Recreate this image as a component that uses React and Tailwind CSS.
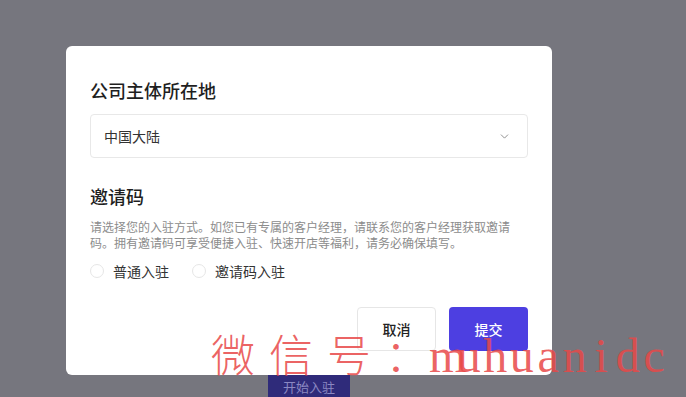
import { ChevronDown } from 'lucide-react'

function Radio({ label }) {
  return (
    <label className="flex items-center gap-[9px] cursor-pointer">
      <span className="h-[14px] w-[14px] rounded-full border border-[#e6e6e6] bg-white" />
      <span className="text-[14px] leading-5 text-[#333]">{label}</span>
    </label>
  )
}

export default function App() {
  return (
    <div className="relative h-[397px] w-[686px] overflow-hidden bg-[#76767e] font-['Noto_Sans_CJK_SC',sans-serif]">
      <div className="pl-[66px] pt-[46px]">
        {/* Modal */}
        <div className="flex h-[329px] w-[486px] flex-col rounded-[6px] bg-white px-6 pt-8 pb-6">
          <h2 className="text-[18px] font-medium leading-6 text-[#1f1f1f]">公司主体所在地</h2>
          <button className="mt-3 flex h-[44px] w-full items-center justify-between rounded-[4px] border border-[#e8e8e8] pl-[13px] pr-4 text-left">
            <span className="text-[14px] text-[#333]">中国大陆</span>
            <ChevronDown size={13} strokeWidth={1.5} className="text-[#777]" />
          </button>

          <h2 className="mt-[26px] text-[18px] font-medium leading-6 text-[#1f1f1f]">邀请码</h2>
          <p className="mt-[11px] w-[424px] text-[12px] leading-4 text-[#8c8c8c]">
            请选择您的入驻方式。如您已有专属的客户经理，请联系您的客户经理获取邀请码。拥有邀请码可享受便捷入驻、快速开店等福利，请务必确保填写。
          </p>
          <div className="mt-[10px] flex items-center gap-[23px]">
            <Radio label="普通入驻" />
            <Radio label="邀请码入驻" />
          </div>

          <div className="mt-auto flex justify-end gap-[13px]">
            <button className="h-[44px] w-[79px] rounded-[4px] border border-[#e6e6e6] bg-white text-[14px] font-medium text-[#222]">
              取消
            </button>
            <button className="h-[44px] w-[79px] rounded-[4px] bg-[#4d3fe1] text-[14px] font-medium text-white">
              提交
            </button>
          </div>
        </div>

        {/* page button behind the overlay */}
        <div className="ml-[202px] flex h-[30px] w-[82px] items-start justify-center bg-[#2f2b7a] pt-[2px] text-[13px] text-[#8b88c2]">
          开始入驻
        </div>
      </div>

      {/* watermark */}
      <div className="pointer-events-none absolute left-[211px] top-[331px] flex items-baseline whitespace-nowrap text-[44px] leading-none text-[#e84848]/85">
        <span className="font-light tracking-[14px]">微信号</span>
        <span className="font-light">：</span>
        <span className="flex font-['Liberation_Serif',serif] text-[48px] font-normal">
          {'muhuanidc'.split('').map((c, i) => (
            <span key={i} className="inline-block w-[26.5px] text-center">{c}</span>
          ))}
        </span>
      </div>
    </div>
  )
}
